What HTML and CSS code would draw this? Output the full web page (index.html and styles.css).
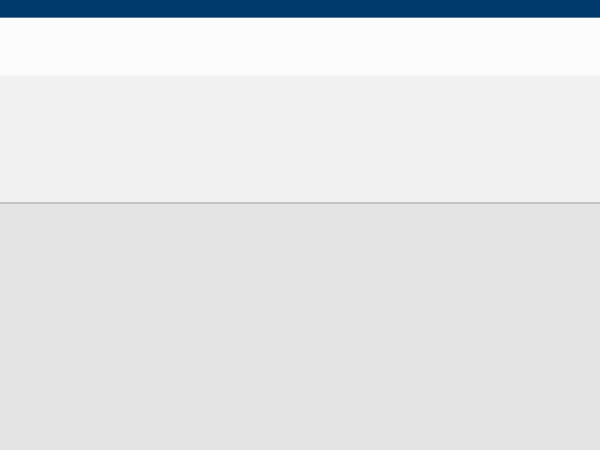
FILE: index.html
```html
<!DOCTYPE html>
<html>
<head>
<meta charset="utf-8">
<link rel="stylesheet" href="styles.css">
</head>
<body>
<div class="topbar"></div>
<div class="header"></div>
<div class="hero"></div>
<div class="content"></div>
</body>
</html>
```
FILE: styles.css
```css
html, body { margin: 0; padding: 0; height: 100%; }
body { background: #e4e4e4; font-family: "Liberation Sans", Arial, sans-serif; display: flex; flex-direction: column; }
.topbar { height: 17px; background: #003a6d; border-bottom: 1px solid #5a7896; }
.header { height: 58px; background: #fcfcfc; }
.hero { height: 126px; background: #f1f1f1; border-bottom: 2px solid #c4c4c4; box-shadow: 0 1px 3px rgba(0,0,0,0.12); }
.content { flex: 1; background: #e4e4e4; }
```
